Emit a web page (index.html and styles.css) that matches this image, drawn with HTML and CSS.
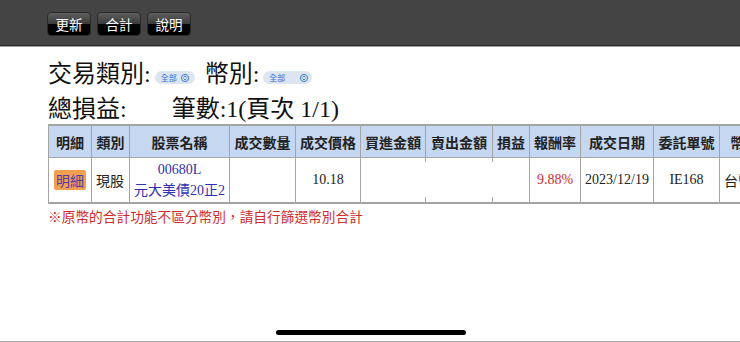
FILE: index.html
```html
<!DOCTYPE html>
<html lang="zh-Hant">
<head>
<meta charset="utf-8">
<title>交易明細</title>
<link rel="stylesheet" href="styles.css">
</head>
<body>
<div class="page">
  <header class="toolbar">
    <button class="tbtn">更新</button>
    <button class="tbtn">合計</button>
    <button class="tbtn">說明</button>
  </header>
  <main class="content">
    <div class="line">交易類別:<span class="sel sel1">全部<svg class="chev" viewBox="0 0 8 8"><circle cx="4" cy="4" r="3.6" fill="none"/><path d="M2.5 3.4 L4 2 L5.5 3.4 M2.5 4.6 L4 6 L5.5 4.6"/></svg></span><span class="lbl2">幣別:</span><span class="sel sel2">全部<svg class="chev" viewBox="0 0 8 8"><circle cx="4" cy="4" r="3.6" fill="none"/><path d="M2.5 3.4 L4 2 L5.5 3.4 M2.5 4.6 L4 6 L5.5 4.6"/></svg></span></div>
    <div class="line">總損益:<span class="count">筆數:1(頁次 1/1)</span></div>
    <div class="tablewrap">
      <table class="grid">
        <colgroup>
          <col class="w1"><col class="w2"><col class="w3"><col class="w4"><col class="w5"><col class="w6"><col class="w7"><col class="w8"><col class="w9"><col class="w10"><col class="w11"><col class="w12">
        </colgroup>
        <thead>
          <tr class="head">
            <th>明細</th><th>類別</th><th>股票名稱</th><th>成交數量</th><th>成交價格</th><th>買進金額</th><th>賣出金額</th><th>損益</th><th>報酬率</th><th>成交日期</th><th>委託單號</th><th>幣別</th>
          </tr>
        </thead>
        <tbody>
          <tr class="row">
            <td><span class="detail">明細</span></td>
            <td class="cjk">現股</td>
            <td class="stock">00680L<br>元大美債20正2</td>
            <td></td>
            <td>10.18</td>
            <td></td>
            <td class="masked"></td>
            <td class="masked"></td>
            <td class="red">9.88%</td>
            <td>2023/12/19</td>
            <td>IE168</td>
            <td class="cjk">台幣</td>
          </tr>
        </tbody>
      </table>
    </div>
    <p class="note">※原幣的合計功能不區分幣別，請自行篩選幣別合計</p>
  </main>
  <div class="homebar"></div>
  <div class="bottomline"></div>
</div>
</body>
</html>
```
FILE: styles.css
```css
html, body {
  margin: 0;
  padding: 0;
  background: #fff;
  overflow: hidden;
}
.page {
  width: 740px;
  height: 342px;
  overflow: hidden;
  font-family: "Liberation Serif", "Noto Sans CJK TC", serif;
  color: #111;
}
.toolbar {
  height: 33px;
  padding: 12px 0 0 47px;
  background: #444444;
  border-bottom: 1px solid #2e2e2e;
  box-shadow: 0 1px 0 #9c9c9c;
  display: flex;
  gap: 6px;
}
.tbtn {
  width: 44px;
  height: 24px;
  padding: 0;
  border: 1px solid #2a2a2a;
  border-radius: 4px;
  background: linear-gradient(#5e5e5e 0%, #3c3c3c 48%, #050505 52%, #000 100%);
  color: #fff;
  font-family: "Noto Sans CJK TC", sans-serif;
  font-size: 13.5px;
  line-height: 22px;
}
.content {
  padding: 8px 0 0 48px;
}
.line {
  font-size: 24px;
  white-space: nowrap;
}
.sel {
  display: inline-flex;
  align-items: center;
  height: 13px;
  padding: 0 4px 0 6px;
  margin-left: 4px;
  border-radius: 7px;
  background: #dde5f1;
  color: #2f6fd8;
  font-family: "Noto Sans CJK TC", sans-serif;
  font-size: 8px;
  vertical-align: 1px;
  box-sizing: border-box;
}
.sel1 { width: 40px; }
.sel2 { width: 49px; justify-content: space-between; }
.chev {
  width: 8px;
  height: 8px;
  margin-left: 4px;
  stroke: #2f6fd8;
  stroke-width: 0.9;
  fill: none;
}
.lbl2 { margin-left: 10px; }
.count { margin-left: 45px; }
.tablewrap {
  width: 692px;
  overflow: hidden;
}
.grid {
  border-collapse: collapse;
  table-layout: fixed;
  width: 722px;
  border: 2px solid #a4a4a4;
  border-left-width: 1px;
}
.w1 { width: 43px; }
.w2 { width: 38px; }
.w3 { width: 100px; }
.w4 { width: 66px; }
.w5 { width: 65px; }
.w6 { width: 65px; }
.w7 { width: 67px; }
.w8 { width: 37px; }
.w9 { width: 51px; }
.w10 { width: 73px; }
.w11 { width: 66px; }
.w12 { width: 50px; }
.grid th, .grid td {
  border: 1px solid #a4a4a4;
  padding: 0;
  text-align: center;
  white-space: nowrap;
  overflow: hidden;
}
.head th {
  height: 31px;
  background: #c6d8f1;
  font-family: "Noto Sans CJK TC", sans-serif;
  font-size: 14px;
  font-weight: bold;
  color: #222;
}
.row td {
  height: 44px;
  font-size: 14px;
  line-height: 20px;
  color: #222;
}
.row td.cjk {
  font-family: "Noto Sans CJK TC", sans-serif;
  text-align: left;
  padding-left: 4px;
}
.row td.stock {
  color: #2f2fb4;
  line-height: 21px;
}
.row td.red { color: #cc2e2e; }
.row td.masked {
  position: relative;
  overflow: visible;
}
.masked::before {
  content: "";
  position: absolute;
  left: -2px;
  top: 4px;
  bottom: 5px;
  width: 3px;
  background: #fff;
}
.detail {
  display: inline-block;
  width: 32px;
  height: 20px;
  line-height: 20px;
  background: #f0a050;
  color: #4e3aa8;
  font-family: "Noto Sans CJK TC", sans-serif;
  font-size: 14px;
  border-radius: 2px;
  vertical-align: middle;
}
.note {
  margin: 2px 0 0;
  color: #d02c2c;
  font-family: "Noto Sans CJK TC", sans-serif;
  font-size: 13.7px;
  white-space: nowrap;
}
.homebar {
  position: fixed;
  left: 276px;
  top: 330px;
  width: 190px;
  height: 5px;
  border-radius: 3px;
  background: #000;
}
.bottomline {
  position: fixed;
  left: 0;
  right: 0;
  top: 341px;
  height: 1px;
  background: #a8a8a8;
}
```
